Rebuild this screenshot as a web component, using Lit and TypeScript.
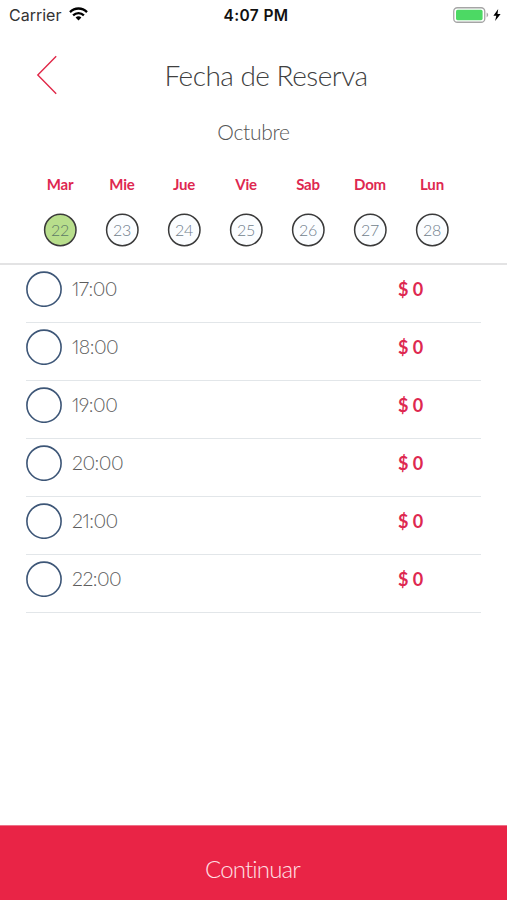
import { LitElement, html, css } from "lit";
import { customElement, state } from "lit/decorators.js";
import { classMap } from "lit/directives/class-map.js";

const DAYS = [
  { name: "Mar", date: 22 },
  { name: "Mie", date: 23 },
  { name: "Jue", date: 24 },
  { name: "Vie", date: 25 },
  { name: "Sab", date: 26 },
  { name: "Dom", date: 27 },
  { name: "Lun", date: 28 },
];

const SLOTS = ["17:00", "18:00", "19:00", "20:00", "21:00", "22:00"];

@customElement("status-bar")
class StatusBar extends LitElement {
  static styles = css`
    :host {
      display: grid;
      grid-template-columns: 1fr auto 1fr;
      align-items: center;
      height: 30px;
      padding: 0 6px 0 9px;
      font: 400 16px/30px Inter, sans-serif;
      color: #111;
    }
    .left, .right { display: flex; align-items: center; }
    .carrier { color: #333; margin-right: 8px; }
    .clock { font-weight: 600; font-size: 15.5px; line-height: 29px; letter-spacing: 0.35px; padding: 1px 0 0 2px; }
    .right { justify-content: flex-end; gap: 4px; }
    svg { display: block; }
    .wifi { margin-top: -2px; }
  `;

  render() {
    return html`
      <div class="left">
        <span class="carrier">Carrier</span>
        <svg class="wifi" width="19" height="14" viewBox="0 0 19 14" fill="none" stroke="#000" stroke-width="2.3">
          <path d="M1 5.1C5.8.3 13.2.3 18 5.1" />
          <path d="M4.1 8.3c3.1-3 7.7-3 10.8 0" />
          <path d="M6.6 10.6c1.8-1.7 4-1.7 5.8 0L9.5 13.6z" fill="#000" stroke="none" />
        </svg>
      </div>
      <span class="clock">4:07 PM</span>
      <div class="right">
        <svg width="36" height="16" viewBox="0 0 36 16">
          <rect x="0.75" y="0.75" width="31" height="14.5" rx="3.6" fill="#fff" stroke="#a5a5a5" stroke-width="1.3" />
          <rect x="3" y="2.8" width="26.6" height="10.4" rx="1.6" fill="#4cd964" />
          <path d="M33.6 5.6c2.1 1 2.1 3.8 0 4.8z" fill="#a5a5a5" />
        </svg>
        <svg width="8" height="12" viewBox="0 0 8 12"><path d="M5.2 0 .4 6.8h2.9L2.1 12l5.5-7H4.5z" fill="#000" /></svg>
      </div>
    `;
  }
}

@customElement("app-root")
class AppRoot extends LitElement {
  @state() private selectedDate = 22;

  static styles = css`
    :host {
      display: flex;
      flex-direction: column;
      height: 900px;
      background: #fff;
      font-family: Lato, sans-serif;
      font-weight: 300;
      font-variant-ligatures: none;
      color: #404040;
    }
    svg { display: block; }
    .title-bar {
      display: grid;
      grid-template-columns: 93px 1fr 68px;
      align-items: center;
      height: 90px;
    }
    .back { padding-left: 36px; }
    h1 {
      margin: 0;
      text-align: center;
      font-weight: 300;
      font-size: 28px;
      line-height: 34px;
      letter-spacing: -0.5px;
      white-space: nowrap;
    }
    .month { height: 24px; text-align: center; font-size: 21px; line-height: 24px; letter-spacing: -0.3px; color: #555; }
    .days { display: grid; grid-template-columns: repeat(7, 62px); padding-left: 29px; margin-top: 31px; }
    .day { display: flex; flex-direction: column; align-items: center; }
    .name {
      height: 18px;
      font-size: 15px;
      line-height: 18px;
      font-weight: 700;
      letter-spacing: -0.2px;
      color: #de2850;
    }
    .date {
      display: grid;
      place-items: center;
      width: 34px;
      height: 34px;
      margin-top: 20px;
      color: #6f7d8c;
      font-size: 16px;
      line-height: 34px;
    }
    .date > * { grid-area: 1 / 1; }
    .date span { z-index: 1; letter-spacing: -0.2px; }
    .date circle { fill: #fbfdff; stroke: #3a3a3a; stroke-width: 1.5; }
    .selected { color: #5c7a66; }
    .selected circle { fill: #b8de8c; }
    .divider { height: 2px; margin-top: 16px; background: #e3e3e4; }
    .slots { flex: 1; padding: 0 26px; }
    .slot {
      box-sizing: border-box;
      display: flex;
      align-items: flex-start;
      height: 58px;
      padding-top: 6px;
      border-bottom: 1px solid #e2e6e9;
      line-height: 36px;
    }
    .radio circle { fill: #fff; stroke: #3d5677; stroke-width: 1.6; }
    .time {
      flex: 1;
      margin-left: 10px;
      font-size: 19.5px;
      letter-spacing: -0.5px;
      font-variant-numeric: proportional-nums;
      color: #5c5c5c;
    }
    .price { width: 83px; font-size: 18px; font-weight: 700; color: #de2850; }
    .continue {
      height: 75px;
      border: 0;
      border-top: 1px solid #ed7188;
      box-sizing: border-box;
      background: #e92446;
      color: #ffe0e5;
      font: 300 24px/30px Lato, sans-serif;
      font-variant-ligatures: none;
      letter-spacing: -0.85px;
      padding: 12px 2px 0 0;
    }
  `;

  render() {
    return html`
      <status-bar></status-bar>
      <header class="title-bar">
        <div class="back">
          <svg width="22" height="40" viewBox="0 0 22 40" fill="none" stroke="#e02848" stroke-width="1.4">
            <path d="M20.2 1.2 1.8 20l18.4 18.8" />
          </svg>
        </div>
        <h1>Fecha de Reserva</h1>
      </header>
      <div class="month">Octubre</div>
      <div class="days">
        ${DAYS.map(
          (d) => html`
            <div class="day" @click=${() => (this.selectedDate = d.date)}>
              <span class="name">${d.name}</span>
              <div class=${classMap({ date: true, selected: d.date === this.selectedDate })}>
                <svg width="34" height="34"><circle cx="17.3" cy="17" r="15.7" /></svg>
                <span>${d.date}</span>
              </div>
            </div>
          `,
        )}
      </div>
      <div class="divider"></div>
      <div class="slots">
        ${SLOTS.map(
          (time) => html`
            <div class="slot">
              <svg class="radio" width="36" height="36"><circle cx="18" cy="18.2" r="17.1" /></svg>
              <span class="time">${time}</span>
              <span class="price">$ 0</span>
            </div>
          `,
        )}
      </div>
      <button class="continue">Continuar</button>
    `;
  }
}
